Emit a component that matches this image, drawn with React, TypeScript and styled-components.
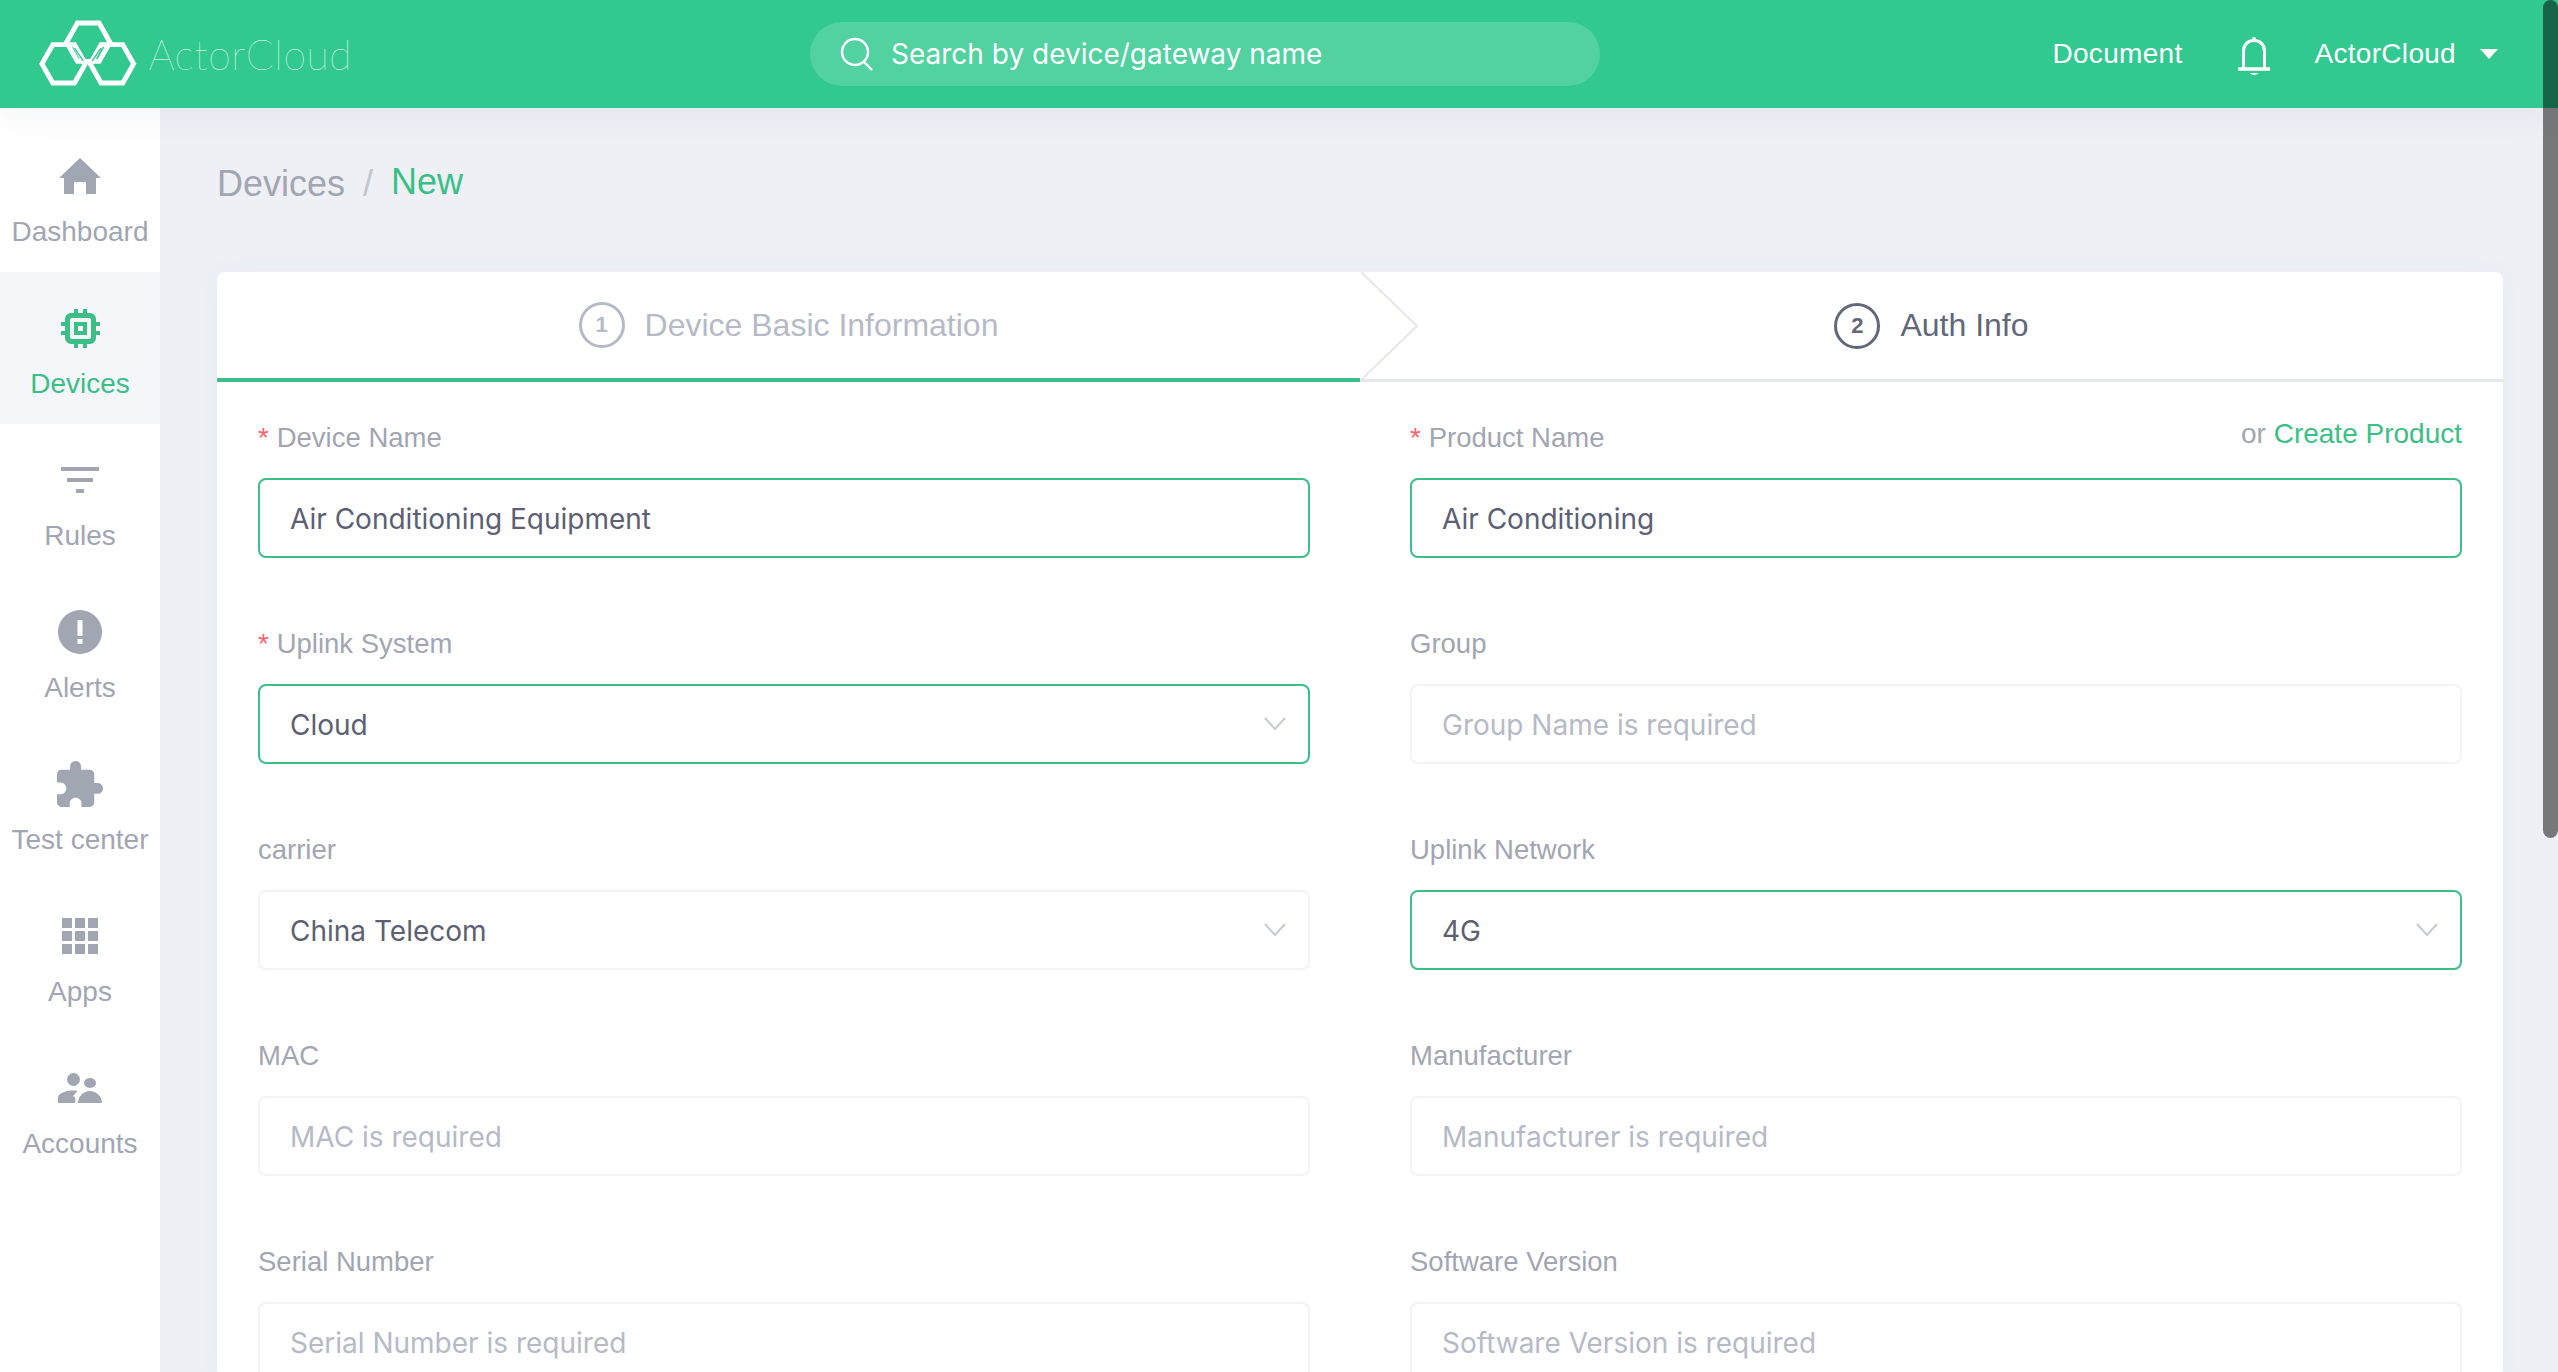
import React from 'react'
import styled, { createGlobalStyle } from 'styled-components'

const GlobalStyle = createGlobalStyle`
  html, body {
    margin: 0;
    padding: 0;
    height: 100%;
    overflow: hidden;
    background: #eef0f6;
    font-family: 'Liberation Sans', Arial, sans-serif;
  }
`

const green = '#3bbf87'
const muted = '#a2a5b2'

const HomeIcon = () => (
  <svg width="42" height="36" viewBox="0 0 42 36" fill={muted}>
    <path d="M21 0 L42 20 H37 V36 H27 V24 H15 V36 H5 V20 H0 Z" />
  </svg>
)

const ChipIcon = () => (
  <svg width="39" height="39" viewBox="0 0 39 39" fill={green}>
    <path
      fillRule="evenodd"
      d="M10 4 H29 A6 6 0 0 1 35 10 V29 A6 6 0 0 1 29 35 H10 A6 6 0 0 1 4 29 V10 A6 6 0 0 1 10 4 Z M11 9 A2 2 0 0 0 9 11 V28 A2 2 0 0 0 11 30 H28 A2 2 0 0 0 30 28 V11 A2 2 0 0 0 28 9 Z"
    />
    <path fillRule="evenodd" d="M13 13 H26 V26 H13 Z M17 17 V22 H22 V17 Z" />
    <rect x="13" y="0" width="4" height="5" />
    <rect x="22" y="0" width="4" height="5" />
    <rect x="13" y="34" width="4" height="5" />
    <rect x="22" y="34" width="4" height="5" />
    <rect x="0" y="13" width="5" height="4" />
    <rect x="0" y="22" width="5" height="4" />
    <rect x="34" y="13" width="5" height="4" />
    <rect x="34" y="22" width="5" height="4" />
  </svg>
)

const RulesIcon = () => (
  <svg width="38" height="26" viewBox="0 0 38 26" fill={muted}>
    <rect x="0" y="0" width="38" height="4" />
    <rect x="6" y="11" width="26" height="4" />
    <rect x="15" y="22" width="8" height="4" />
  </svg>
)

const AlertIcon = () => (
  <svg width="44" height="44" viewBox="0 0 44 44">
    <circle cx="22" cy="22" r="22" fill={muted} />
    <rect x="19.5" y="10" width="5" height="16" fill="#fff" />
    <rect x="19.5" y="29" width="5" height="5" fill="#fff" />
  </svg>
)

const PuzzleIcon = () => (
  <svg width="46" height="46" viewBox="2 1 21 21" fill={muted}>
    <path d="M20.5 11H19V7c0-1.1-.9-2-2-2h-4V3.5C13 2.12 11.88 1 10.5 1S8 2.12 8 3.5V5H4c-1.1 0-1.99.9-1.99 2v3.8H3.5c1.49 0 2.7 1.21 2.7 2.7s-1.21 2.7-2.7 2.7H2V20c0 1.1.9 2 2 2h3.8v-1.5c0-1.49 1.21-2.7 2.7-2.7 1.49 0 2.7 1.21 2.7 2.7V22H17c1.1 0 2-.9 2-2v-4h1.5c1.38 0 2.5-1.12 2.5-2.5S21.88 11 20.5 11z" />
  </svg>
)

const AppsIcon = () => (
  <svg width="36" height="36" viewBox="0 0 36 36" fill={muted}>
    {[0, 13, 26].map((y) =>
      [0, 13, 26].map((x) => <rect key={`${x}-${y}`} x={x} y={y} width="10" height="10" />)
    )}
  </svg>
)

const AccountsIcon = () => (
  <svg width="44" height="30" viewBox="0 0 44 30" fill={muted}>
    <ellipse cx="15.5" cy="6.5" rx="6.5" ry="6.5" />
    <ellipse cx="32" cy="10" rx="6" ry="5" />
    <path d="M0 30 V24 C1 20 8 17.5 15 17.5 C16.5 17.5 18 17.6 19.5 18 C18 20 17 21 15 23 C17 24 18 25 17 30 Z" />
    <path d="M20 30 C20 23 26 18 32 18 C38 18 44 23 44 30 Z" />
  </svg>
)

const navItems = [
  { label: 'Dashboard', icon: <HomeIcon /> },
  { label: 'Devices', icon: <ChipIcon />, active: true },
  { label: 'Rules', icon: <RulesIcon /> },
  { label: 'Alerts', icon: <AlertIcon /> },
  { label: 'Test center', icon: <PuzzleIcon /> },
  { label: 'Apps', icon: <AppsIcon /> },
  { label: 'Accounts', icon: <AccountsIcon /> },
]

type FieldData = {
  label: string
  value?: string
  placeholder?: string
  required?: boolean
  select?: boolean
  focused?: boolean
  extra?: boolean
}

const fields: FieldData[] = [
  { label: 'Device Name', value: 'Air Conditioning Equipment', required: true, focused: true },
  { label: 'Product Name', value: 'Air Conditioning', required: true, focused: true, extra: true },
  { label: 'Uplink System', value: 'Cloud', required: true, select: true, focused: true },
  { label: 'Group', placeholder: 'Group Name is required' },
  { label: 'carrier', value: 'China Telecom', select: true },
  { label: 'Uplink Network', value: '4G', select: true, focused: true },
  { label: 'MAC', placeholder: 'MAC is required' },
  { label: 'Manufacturer', placeholder: 'Manufacturer is required' },
  { label: 'Serial Number', placeholder: 'Serial Number is required' },
  { label: 'Software Version', placeholder: 'Software Version is required' },
]

const hexPoints = (cx: number, cy: number) =>
  [
    [cx - 22, cy],
    [cx - 11, cy - 19.5],
    [cx + 11, cy - 19.5],
    [cx + 22, cy],
    [cx + 11, cy + 19.5],
    [cx - 11, cy + 19.5],
  ]
    .map((p) => p.join(','))
    .join(' ')

const App: React.FC = () => {
  return (
    <Page>
      <GlobalStyle />
      <Header>
        <Logo>
          <svg width="102" height="70" viewBox="0 0 102 70" fill="none" stroke="#fff" strokeWidth="5">
            <polygon points={hexPoints(51, 23)} />
            <polygon points={hexPoints(26, 45)} />
            <polygon points={hexPoints(75, 45)} />
            <path d="M37 29 L46 42 M64 29 L55 42" stroke="#31c98f" strokeWidth="1.5" />
          </svg>
          <LogoText>ActorCloud</LogoText>
        </Logo>
        <SearchBar>
          <svg width="34" height="34" viewBox="0 0 34 34" fill="none" stroke="#fff" strokeWidth="2.4">
            <circle cx="15" cy="15" r="13" />
            <path d="M24 25 L32 33" />
          </svg>
          <SearchText>Search by device/gateway name</SearchText>
        </SearchBar>
        <HeaderRight>
          <HeaderLink>Document</HeaderLink>
          <BellSlot>
            <svg width="32" height="40" viewBox="0 0 32 40" fill="none" stroke="#fff" strokeWidth="3">
              <path d="M5.5 32 V15 C5.5 8.5 10 4.5 16 4.5 C22 4.5 26.5 8.5 26.5 15 V32" />
              <path d="M1 33 H31" strokeWidth="3.4" strokeLinecap="round" />
              <circle cx="16" cy="3" r="2" fill="#fff" stroke="none" />
              <path d="M12 37 C13 39.5 19 39.5 20 37 Z" fill="#fff" stroke="none" />
            </svg>
          </BellSlot>
          <HeaderLink>ActorCloud</HeaderLink>
          <Caret />
        </HeaderRight>
      </Header>
      <Body>
        <Sidebar>
          {navItems.map((item) => (
            <NavItem key={item.label} $active={item.active}>
              <NavIcon>{item.icon}</NavIcon>
              <NavLabel>{item.label}</NavLabel>
            </NavItem>
          ))}
        </Sidebar>
        <Main>
          <Breadcrumb>
            <CrumbParent>Devices</CrumbParent>
            <CrumbSlash>/</CrumbSlash>
            <CrumbCurrent>New</CrumbCurrent>
          </Breadcrumb>
          <Card>
            <Steps>
              <Step $active>
                <StepNumber $muted>1</StepNumber>
                <StepTitle $muted>Device Basic Information</StepTitle>
                <StepArrow width="58" height="110" viewBox="0 0 58 110" fill="none">
                  <path d="M1 0 L57 54 L1 108" stroke="#e6e7ec" strokeWidth="2" />
                </StepArrow>
              </Step>
              <Step>
                <StepNumber>2</StepNumber>
                <StepTitle>Auth Info</StepTitle>
              </Step>
            </Steps>
            <FormGrid>
              {fields.map((field) => (
                <Field key={field.label}>
                  <LabelRow>
                    <Label>
                      {field.required && <Star>*</Star>}
                      {field.label}
                    </Label>
                    {field.extra && (
                      <LabelExtra>
                        or <ExtraLink>Create Product</ExtraLink>
                      </LabelExtra>
                    )}
                  </LabelRow>
                  <Control $focused={field.focused}>
                    <ControlText $placeholder={!field.value}>{field.value || field.placeholder}</ControlText>
                    {field.select && (
                      <svg width="22" height="14" viewBox="0 0 22 14" fill="none" stroke="#c8cad2" strokeWidth="2">
                        <path d="M1 1 L11 12 L21 1" />
                      </svg>
                    )}
                  </Control>
                </Field>
              ))}
            </FormGrid>
          </Card>
        </Main>
      </Body>
      <ScrollThumb />
    </Page>
  )
}

const Page = styled.div`
  position: relative;
  display: flex;
  flex-direction: column;
  height: 100vh;
  overflow: hidden;
`

const Header = styled.header`
  position: relative;
  z-index: 2;
  display: flex;
  align-items: center;
  flex: 0 0 108px;
  padding-left: 38px;
  background: #31c98f;
  box-shadow: 0 4px 40px rgba(40, 50, 90, 0.06);
`

const Logo = styled.div`
  display: flex;
  align-items: center;
  width: 314px;
  color: #fff;
`

const LogoText = styled.span`
  margin-left: 10px;
  font-family: Lato, 'Liberation Sans', sans-serif;
  font-size: 41px;
  font-weight: 100;
  letter-spacing: 0.5px;
`

const SearchBar = styled.div`
  display: flex;
  align-items: center;
  width: 790px;
  height: 64px;
  margin-left: 458px;
  padding-left: 30px;
  box-sizing: border-box;
  border-radius: 32px;
  background: rgba(255, 255, 255, 0.16);
`

const SearchText = styled.span`
  margin-left: 17px;
  color: #fff;
  font-family: Inter, 'Liberation Sans', sans-serif;
  font-size: 28px;
`

const HeaderRight = styled.div`
  display: flex;
  align-items: center;
  margin-left: auto;
  padding-right: 60px;
  color: #fff;
`

const HeaderLink = styled.span`
  font-size: 28px;
  letter-spacing: 0.3px;
`

const BellSlot = styled.div`
  display: flex;
  margin: 4px 44px 0 56px;
`

const Caret = styled.span`
  width: 0;
  height: 0;
  margin-left: 24px;
  border-left: 9px solid transparent;
  border-right: 9px solid transparent;
  border-top: 10px solid #fff;
`

const Body = styled.div`
  display: flex;
  flex: 1;
  min-height: 0;
`

const Sidebar = styled.nav`
  flex: 0 0 160px;
  padding-top: 12px;
  background: #fff;
`

const NavItem = styled.div<{ $active?: boolean }>`
  display: flex;
  flex-direction: column;
  align-items: center;
  height: 152px;
  padding-top: 28px;
  box-sizing: border-box;
  background: ${(p) => (p.$active ? '#f5f6fa' : 'transparent')};
  color: ${(p) => (p.$active ? green : muted)};
`

const NavIcon = styled.div`
  display: flex;
  align-items: center;
  justify-content: center;
  height: 56px;
`

const NavLabel = styled.div`
  font-size: 28px;
  line-height: 56px;
  white-space: nowrap;
`

const Main = styled.main`
  flex: 1;
  min-width: 0;
  padding: 0 55px 0 57px;
`

const Breadcrumb = styled.div`
  display: flex;
  align-items: center;
  height: 164px;
  padding-bottom: 12px;
  box-sizing: border-box;
  font-size: 36px;
`

const CrumbParent = styled.span`
  color: ${muted};
`

const CrumbSlash = styled.span`
  margin: 0 18px;
  color: #c4c6cc;
`

const CrumbCurrent = styled.span`
  position: relative;
  top: -2px;
  color: ${green};
`

const Card = styled.section`
  border-radius: 8px 8px 0 0;
  background: #fff;
  box-shadow: 0 0 30px rgba(60, 70, 120, 0.04);
`

const Steps = styled.div`
  display: flex;
  height: 110px;
`

const Step = styled.div<{ $active?: boolean }>`
  position: relative;
  flex: 1;
  display: flex;
  align-items: center;
  justify-content: center;
  gap: 20px;
  padding-top: ${(p) => (p.$active ? '0' : '0')};
  box-sizing: border-box;
  border-bottom: ${(p) => (p.$active ? `4px solid ${green}` : '3px solid #e6e7ec')};
  flex-basis: ${(p) => (p.$active ? '1143px' : '1143px')};
`

const StepNumber = styled.span<{ $muted?: boolean }>`
  display: flex;
  align-items: center;
  justify-content: center;
  width: 46px;
  height: 46px;
  box-sizing: border-box;
  border: 3px solid ${(p) => (p.$muted ? '#b6bac6' : '#626779')};
  border-radius: 50%;
  color: ${(p) => (p.$muted ? '#b6bac6' : '#626779')};
  font-size: 22px;
  font-weight: 700;
`

const StepTitle = styled.span<{ $muted?: boolean }>`
  color: ${(p) => (p.$muted ? '#b6bac6' : '#626779')};
  font-size: 32px;
`

const StepArrow = styled.svg`
  position: absolute;
  top: 0;
  left: 100%;
  z-index: 1;
`

const FormGrid = styled.div`
  display: grid;
  grid-template-columns: 1fr 1fr;
  column-gap: 100px;
  row-gap: 66px;
  padding: 36px 41px 0;
`

const Field = styled.div`
  display: flex;
  flex-direction: column;
  gap: 20px;
`

const LabelRow = styled.div`
  display: flex;
  align-items: center;
  justify-content: space-between;
  height: 40px;
`

const Label = styled.label`
  color: ${muted};
  font-size: 27.5px;
`

const Star = styled.span`
  margin-right: 8px;
  color: #f5646c;
`

const LabelExtra = styled.span`
  position: relative;
  top: -4px;
  color: ${muted};
  font-size: 28px;
`

const ExtraLink = styled.a`
  color: ${green};
`

const Control = styled.div<{ $focused?: boolean }>`
  display: flex;
  align-items: center;
  justify-content: space-between;
  height: 80px;
  padding: 0 22px 0 30px;
  box-sizing: border-box;
  border: 2px solid ${(p) => (p.$focused ? green : '#f2f3f7')};
  border-radius: 8px;
  background: #fff;
`

const ControlText = styled.span<{ $placeholder?: boolean }>`
  padding-top: 2px;
  color: ${(p) => (p.$placeholder ? '#b6bac6' : '#5c6072')};
  font-family: Inter, 'Liberation Sans', sans-serif;
  font-size: 28px;
`

const ScrollThumb = styled.div`
  position: absolute;
  top: 0;
  right: 0;
  z-index: 3;
  width: 15px;
  height: 838px;
  border-radius: 8px;
  background: rgba(0, 0, 0, 0.5);
`

export default App
